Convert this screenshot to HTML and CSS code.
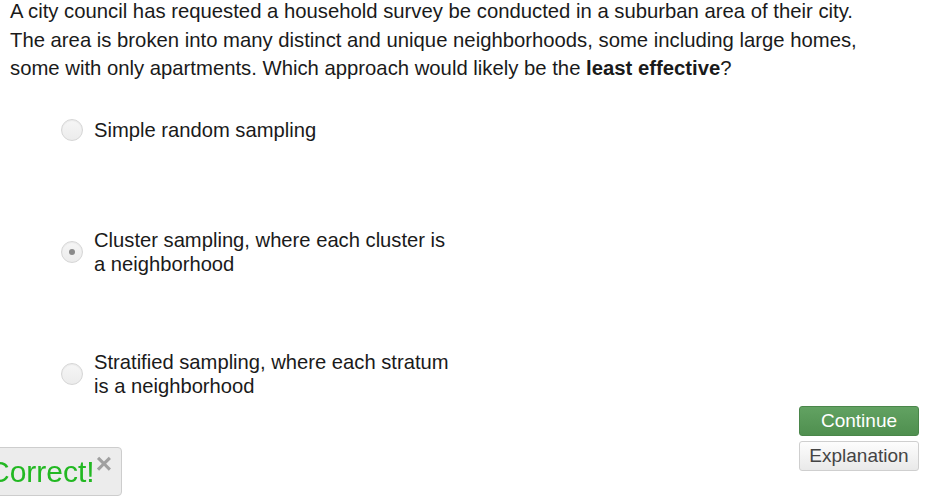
FILE: index.html
```html
<!DOCTYPE html>
<html lang="en">
<head>
<meta charset="UTF-8">
<meta name="viewport" content="width=device-width, initial-scale=1.0">
<title>Question</title>
<link rel="stylesheet" href="styles.css">
</head>
<body>
<div class="pregunta">
    A city council has requested a household survey be conducted in a suburban area of their city.
    The area is broken into many distinct and unique neighborhoods, some including large homes,
    some with only apartments. Which approach would likely be the <b>least effective</b>?
</div>
<div class="opciones">
    <label class="opcion">
        <span class="radio"></span>
        <span class="texto">Simple random sampling</span>
    </label>
    <label class="opcion">
        <span class="radio marcado"></span>
        <span class="texto">Cluster sampling, where each cluster is a neighborhood</span>
    </label>
    <label class="opcion">
        <span class="radio"></span>
        <span class="texto">Stratified sampling, where each stratum is a neighborhood</span>
    </label>
</div>
<div class="acciones">
    <button type="button" class="boton-continuar">Continue</button>
    <button type="button" class="boton-explicacion">Explanation</button>
</div>
<div class="aviso">
    <span class="aviso-texto">Correct!</span>
    <span class="aviso-cerrar">&times;</span>
</div>
</body>
</html>
```

FILE: styles.css
```css
body {
    font-family: "Liberation Sans", Arial, sans-serif;
    margin: 0;
    padding: 0 11px 0 10px;
    background-color: #fff;
    color: #1a1a1a;
    overflow: hidden;
}
.pregunta {
    font-size: 20.3px;
    line-height: 28.5px;
    margin-top: -3px;
    max-width: 860px;
}
.opciones {
    display: flex;
    flex-direction: column;
    gap: 74px;
    margin-top: 23px;
    padding-left: 51px;
}
.opcion {
    display: flex;
    align-items: center;
    gap: 11px;
    min-height: 48px;
}
.radio {
    flex: none;
    width: 20px;
    height: 20px;
    border: 1px solid #d6d6d6;
    border-radius: 50%;
    background: linear-gradient(#f6f6f6, #ececec);
    box-shadow: inset 0 1px 1px rgba(0, 0, 0, 0.05);
    display: flex;
    align-items: center;
    justify-content: center;
}
.radio.marcado::after {
    content: "";
    width: 6px;
    height: 6px;
    border-radius: 50%;
    background-color: #8a8a8a;
}
.texto {
    font-size: 20.2px;
    line-height: 24px;
    width: 362px;
}
.acciones {
    display: flex;
    flex-direction: column;
    align-items: flex-end;
    gap: 5px;
    margin-top: 8px;
}
.acciones button {
    width: 120px;
    height: 30px;
    font-family: "Liberation Sans", Arial, sans-serif;
    font-size: 19px;
    border-radius: 3px;
    padding: 0;
    cursor: pointer;
}
.boton-continuar {
    background: linear-gradient(#62a262, #4f8f4f);
    border: 1px solid #4a864a;
    color: #fff;
}
.boton-explicacion {
    background: linear-gradient(#fdfdfd, #e9e9e9);
    border: 1px solid #cfcfcf;
    color: #444;
}
.aviso {
    position: fixed;
    left: -8px;
    bottom: 1px;
    width: 128px;
    height: 47px;
    background-color: #ececec;
    border: 1px solid #cdcdcd;
    border-radius: 4px;
    display: flex;
    align-items: center;
}
.aviso-texto {
    font-size: 30px;
    color: #22b822;
    margin-left: -5px;
}
.aviso-cerrar {
    align-self: flex-start;
    font-size: 28px;
    font-weight: bold;
    line-height: 26px;
    color: #a0a0a0;
    margin-left: 1px;
    margin-top: 3px;
}
```
